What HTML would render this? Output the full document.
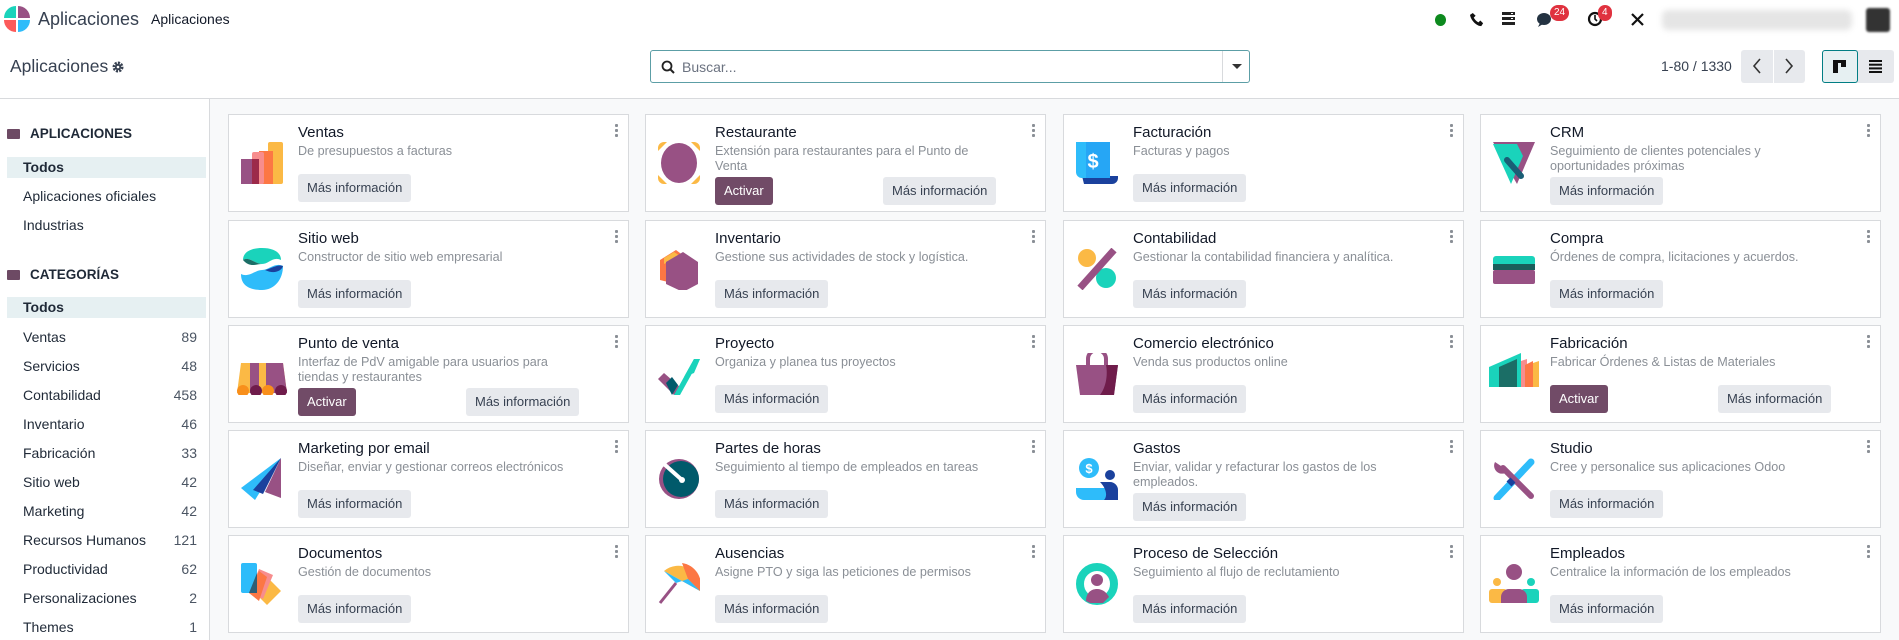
<!DOCTYPE html>
<html><head><meta charset="utf-8"><style>
*{box-sizing:border-box;margin:0;padding:0}
body{width:1899px;height:640px;overflow:hidden;font-family:"Liberation Sans",sans-serif;background:#f8f9fa;position:relative;color:#1f2937}
.abs{position:absolute}
.nav{left:0;top:0;width:1899px;height:40px;background:#fff}
.cp{left:0;top:40px;width:1899px;height:59px;background:#fff;border-bottom:1px solid #d8dadd}
.side{left:0;top:99px;width:210px;height:541px;background:#fff;border-right:1px solid #d8dadd}
.card{position:absolute;width:401px;height:98px;background:#fff;border:1px solid #d8dadd}
.card svg.ic{position:absolute;left:12px;top:27px}
.card .t{position:absolute;left:69px;top:9px;font-size:15px;color:#111827;white-space:nowrap}
.card .d{position:absolute;left:69px;top:29px;font-size:12.6px;line-height:15px;color:#8a8f96;width:272px}
.card .b{position:absolute;top:59px;height:28px;line-height:28px;font-size:13px;color:#374151;background:#e7e9ed;border-radius:3px;padding:0 9px;white-space:nowrap}
.card .b.a{background:#714b67;color:#fff}
.card .dots{position:absolute;right:10px;top:9px;width:3px}
.card .dots i{display:block;width:3px;height:3px;background:#8a8f96;margin-bottom:2px;border-radius:1px}
.si{position:absolute;left:23px;font-size:14px;color:#1f2937}
.sc{position:absolute;right:12px;font-size:14px;color:#4b5563}
.hd{position:absolute;left:7px;font-size:13.5px;font-weight:bold;color:#1f2937}
.hd:before{content:"";display:inline-block;width:13px;height:10px;background:#6d4a64;margin-right:10px;border-radius:1px;vertical-align:-1px}
.sel{position:absolute;left:7px;width:199px;height:21px;background:#e6f0f2}
.badge{position:absolute;background:#e0323f;color:#fff;font-size:10px;border-radius:8px;height:16px;line-height:16px;padding:0 4px}
</style></head><body>
<div class="abs nav">
 <svg class="abs" style="left:4px;top:6px" width="26" height="26" viewBox="0 0 26 26"><path d="M12 0A12 12 0 0 0 0 12h12z" fill="#1ad3bb"/><path d="M14 0a12 12 0 0 1 12 12H14z" fill="#985184"/><path d="M0 14a12 12 0 0 0 12 12V14z" fill="#fc5a5a"/><path d="M14 26a12 12 0 0 0 12-12H14z" fill="#2ebcfa"/></svg>
 <div class="abs" style="left:38px;top:9px;font-size:18px;color:#374151">Aplicaciones</div>
 <div class="abs" style="left:151px;top:11px;font-size:14px;color:#111827">Aplicaciones</div>
 <div class="abs" style="left:1435px;top:14px;width:11px;height:12px;border-radius:50%;background:#0d8a1e"></div>
 <svg class="abs" style="left:1470px;top:12px" width="15" height="15" viewBox="0 0 16 16"><path d="M3 1l3 3-2 2c1 2 3 4 5 5l2-2 3 3-2 3C7 15 1 9 0 3z" fill="#111"/></svg>
 <svg class="abs" style="left:1502px;top:12px" width="13" height="14" viewBox="0 0 13 14"><rect y="0" width="13" height="3" fill="#222"/><rect y="5" width="13" height="3" fill="#222"/><rect y="10" width="13" height="3" fill="#222"/><rect x="9" y="1" width="2" height="1" fill="#fff"/><rect x="9" y="6" width="2" height="1" fill="#fff"/></svg>
 <svg class="abs" style="left:1536px;top:12px" width="18" height="16" viewBox="0 0 18 16"><ellipse cx="8" cy="7" rx="7" ry="6" fill="#243342"/><path d="M4 11l-2 4 5-3z" fill="#243342"/></svg>
 <div class="badge" style="left:1550px;top:5px">24</div>
 <svg class="abs" style="left:1587px;top:11px" width="16" height="16" viewBox="0 0 16 16"><circle cx="8" cy="8" r="6" fill="none" stroke="#111" stroke-width="2.2"/><path d="M8 4v4l2 2" stroke="#111" stroke-width="1.6" fill="none"/></svg>
 <div class="badge" style="left:1598px;top:5px">4</div>
 <svg class="abs" style="left:1630px;top:12px" width="15" height="15" viewBox="0 0 15 15"><path d="M2 2l11 11M13 2L2 13" stroke="#111" stroke-width="2.2"/></svg>
 <div class="abs" style="left:1662px;top:10px;width:190px;height:20px;background:#e5e5e5;border-radius:6px;filter:blur(3px)"></div>
 <div class="abs" style="left:1866px;top:8px;width:24px;height:24px;background:#333;border-radius:3px;filter:blur(1px)"></div>
</div>
<div class="abs cp">
 <div class="abs" style="left:10px;top:16px;font-size:17.5px;color:#374151">Aplicaciones</div>
 <svg class="abs" style="left:112px;top:21px" width="12" height="12" viewBox="0 0 12 12"><circle cx="6" cy="6" r="4" fill="none" stroke="#374151" stroke-width="3" stroke-dasharray="2 1.1"/><circle cx="6" cy="6" r="3.2" fill="#374151"/><circle cx="6" cy="6" r="1.3" fill="#fff"/></svg>
 <div class="abs" style="left:650px;top:10px;width:600px;height:33px;border:1px solid #5c9ea6;border-radius:3px;background:#fff">
  <svg class="abs" style="left:10px;top:9px" width="14" height="14" viewBox="0 0 14 14"><circle cx="6" cy="6" r="4.5" fill="none" stroke="#222" stroke-width="1.8"/><path d="M9.5 9.5l3.5 3.5" stroke="#222" stroke-width="2"/></svg>
  <div class="abs" style="left:31px;top:8px;font-size:14px;color:#6b7280">Buscar...</div>
  <div class="abs" style="left:571px;top:0;width:1px;height:31px;background:#d8dadd"></div>
  <div class="abs" style="left:581px;top:13px;width:0;height:0;border-left:5px solid transparent;border-right:5px solid transparent;border-top:5px solid #333"></div>
 </div>
 <div class="abs" style="left:1661px;top:18px;font-size:14px;color:#374151">1-80 / 1330</div>
 <div class="abs" style="left:1741px;top:10px;width:64px;height:33px;background:#e7e9ed;border-radius:3px"></div>
 <div class="abs" style="left:1773px;top:10px;width:1px;height:33px;background:#fff"></div>
 <svg class="abs" style="left:1751px;top:18px" width="12" height="16" viewBox="0 0 12 16"><path d="M9 1L3 8l6 7" stroke="#333" stroke-width="1.6" fill="none"/></svg>
 <svg class="abs" style="left:1783px;top:18px" width="12" height="16" viewBox="0 0 12 16"><path d="M3 1l6 7-6 7" stroke="#333" stroke-width="1.6" fill="none"/></svg>
 <div class="abs" style="left:1822px;top:10px;width:72px;height:33px;background:#e7e9ed;border-radius:3px"></div>
 <div class="abs" style="left:1822px;top:10px;width:36px;height:33px;background:#e6f0f2;border:1px solid #017e84;border-radius:3px"></div>
 <svg class="abs" style="left:1833px;top:20px" width="13" height="13" viewBox="0 0 13 13"><rect width="13" height="3" fill="#111"/><rect width="5" height="13" fill="#111"/><rect x="8" width="5" height="7" fill="#111"/></svg>
 <svg class="abs" style="left:1869px;top:20px" width="13" height="13" viewBox="0 0 13 13"><rect y="0" width="13" height="2" fill="#111"/><rect y="3.7" width="13" height="2" fill="#111"/><rect y="7.4" width="13" height="2" fill="#111"/><rect y="11" width="13" height="2" fill="#111"/></svg>
</div>
<div class="abs side">
 <div class="hd" style="top:27px">APLICACIONES</div>
 <div class="sel" style="top:58px"></div>
 <div class="si" style="top:60px;font-weight:bold">Todos</div>
 <div class="si" style="top:89px">Aplicaciones oficiales</div>
 <div class="si" style="top:118px">Industrias</div>
 <div class="hd" style="top:168px">CATEGORÍAS</div>
 <div class="sel" style="top:198px"></div>
 <div class="si" style="top:200px;font-weight:bold">Todos</div>
 <div class="si" style="top:230px">Ventas</div><div class="sc" style="top:230px">89</div>
 <div class="si" style="top:259px">Servicios</div><div class="sc" style="top:259px">48</div>
 <div class="si" style="top:288px">Contabilidad</div><div class="sc" style="top:288px">458</div>
 <div class="si" style="top:317px">Inventario</div><div class="sc" style="top:317px">46</div>
 <div class="si" style="top:346px">Fabricación</div><div class="sc" style="top:346px">33</div>
 <div class="si" style="top:375px">Sitio web</div><div class="sc" style="top:375px">42</div>
 <div class="si" style="top:404px">Marketing</div><div class="sc" style="top:404px">42</div>
 <div class="si" style="top:433px">Recursos Humanos</div><div class="sc" style="top:433px">121</div>
 <div class="si" style="top:462px">Productividad</div><div class="sc" style="top:462px">62</div>
 <div class="si" style="top:491px">Personalizaciones</div><div class="sc" style="top:491px">2</div>
 <div class="si" style="top:520px">Themes</div><div class="sc" style="top:520px">1</div>
</div>

<!-- Row 1 -->
<div class="card" style="left:228px;top:114px"><svg class="ic" width="42" height="42" viewBox="0 0 42 42"><rect x="27" y="0" width="15" height="42" rx="2" fill="#fbb945"/><rect x="18" y="9" width="14" height="33" fill="#fc7744"/><rect x="11" y="10" width="12" height="32" rx="2" fill="#f78d8d"/><rect x="0" y="17" width="13" height="25" fill="#985184"/><rect x="11" y="17" width="7" height="25" fill="#9c2a4a"/></svg><div class="t">Ventas</div><div class="d">De presupuestos a facturas</div><div class="b" style="left:69px">Más información</div><div class="dots"><i></i><i></i><i></i></div></div>
<div class="card" style="left:645px;top:114px"><svg class="ic" width="42" height="42" viewBox="0 0 42 42"><path d="M0 6a6 6 0 0 1 6-6h3L0 9zM42 6a6 6 0 0 0-6-6h-3l9 9zM0 36a6 6 0 0 0 6 6h3L0 33zM42 36a6 6 0 0 1-6 6h-3l9-9z" fill="#fbb945"/><ellipse cx="21" cy="21" rx="18" ry="20" fill="#985184"/></svg><div class="t">Restaurante</div><div class="d">Extensión para restaurantes para el Punto de Venta</div><div class="b a" style="left:69px;top:62px">Activar</div><div class="b" style="left:237px;top:62px">Más información</div><div class="dots"><i></i><i></i><i></i></div></div>
<div class="card" style="left:1063px;top:114px"><svg class="ic" width="42" height="42" viewBox="0 0 42 42"><path d="M6 34h36v2a6 6 0 0 1-6 6H8z" fill="#1a419d"/><path d="M0 0h34v36H6a6 6 0 0 1-6-6z" fill="#2ebcfa"/><path d="M10 0h24v36H10z" fill="#1e90f0" opacity=".5"/><text x="17" y="26" font-family="Liberation Sans" font-weight="bold" font-size="20" fill="#fff" text-anchor="middle">$</text></svg><div class="t">Facturación</div><div class="d">Facturas y pagos</div><div class="b" style="left:69px">Más información</div><div class="dots"><i></i><i></i><i></i></div></div>
<div class="card" style="left:1480px;top:114px"><svg class="ic" width="42" height="42" viewBox="0 0 42 42"><path d="M0 0h42l-18 42z" fill="#985184"/><path d="M0 2h24L30 14 18 42z" fill="#1ad3bb"/><path d="M14 18l14 16" stroke="#1a5e75" stroke-width="6" stroke-linecap="round"/></svg><div class="t">CRM</div><div class="d">Seguimiento de clientes potenciales y oportunidades próximas</div><div class="b" style="left:69px;top:62px">Más información</div><div class="dots"><i></i><i></i><i></i></div></div>

<!-- Row 2 -->
<div class="card" style="left:228px;top:220px"><svg class="ic" width="42" height="42" viewBox="0 0 42 42"><path d="M2 12C2 4 10 0 21 0s19 4 19 12c-8-4-12 4-19 4S8 8 2 12z" fill="#1ad3bb"/><path d="M2 12c6-4 12 4 19 4-6 0-12 4-19-4z" fill="#1b6e66"/><path d="M0 26c8 4 14-4 21-4s13-8 21-4c0 14-9 24-21 24S0 38 0 26z" fill="#2ebcfa"/><path d="M24 22c6-1 12-6 18-4-2 6-10 8-18 4z" fill="#1a419d"/></svg><div class="t">Sitio web</div><div class="d">Constructor de sitio web empresarial</div><div class="b" style="left:69px">Más información</div><div class="dots"><i></i><i></i><i></i></div></div>
<div class="card" style="left:645px;top:220px"><svg class="ic" width="42" height="42" viewBox="0 0 42 42"><path d="M2 12L18 2l8 6v30L2 32z" fill="#fc7744"/><path d="M6 10L16 4l6 4L6 16z" fill="#fbb945"/><path d="M8 14l17-10 15 10v22L25 44 8 36z" fill="#985184"/></svg><div class="t">Inventario</div><div class="d">Gestione sus actividades de stock y logística.</div><div class="b" style="left:69px">Más información</div><div class="dots"><i></i><i></i><i></i></div></div>
<div class="card" style="left:1063px;top:220px"><svg class="ic" width="42" height="42" viewBox="0 0 42 42"><circle cx="11" cy="10" r="9" fill="#fbb945"/><circle cx="30" cy="30" r="10" fill="#1ad3bb"/><path d="M4 40L38 2" stroke="#985184" stroke-width="7"/></svg><div class="t">Contabilidad</div><div class="d" style="width:320px">Gestionar la contabilidad financiera y analítica.</div><div class="b" style="left:69px">Más información</div><div class="dots"><i></i><i></i><i></i></div></div>
<div class="card" style="left:1480px;top:220px"><svg class="ic" width="42" height="42" viewBox="0 0 42 42"><rect x="0" y="8" width="42" height="10" rx="3" fill="#1ad3bb"/><rect x="0" y="16" width="42" height="6" fill="#1a5e5b"/><rect x="0" y="22" width="42" height="14" rx="2" fill="#985184"/></svg><div class="t">Compra</div><div class="d" style="width:320px">Órdenes de compra, licitaciones y acuerdos.</div><div class="b" style="left:69px">Más información</div><div class="dots"><i></i><i></i><i></i></div></div>

<!-- Row 3 -->
<div class="card" style="left:228px;top:325px"><svg class="ic" width="50" height="42" viewBox="0 0 50 42" style="left:8px"><path d="M4 10h42l4 30H0z" fill="#fbb945"/><path d="M13 10h9v30h-9zM29 10h9v30h-9z" fill="#985184"/><path d="M38 10h8l4 30h-12z" fill="#985184"/><circle cx="6" cy="38" r="6" fill="#f88f1b"/><circle cx="19" cy="38" r="6" fill="#6f1c4b"/><circle cx="31" cy="38" r="6" fill="#f88f1b"/><circle cx="44" cy="38" r="6" fill="#6f1c4b"/></svg><div class="t">Punto de venta</div><div class="d">Interfaz de PdV amigable para usuarios para tiendas y restaurantes</div><div class="b a" style="left:69px;top:62px">Activar</div><div class="b" style="left:237px;top:62px">Más información</div><div class="dots"><i></i><i></i><i></i></div></div>
<div class="card" style="left:645px;top:325px"><svg class="ic" width="42" height="42" viewBox="0 0 42 42"><path d="M0 26l6-6 16 14-6 8z" fill="#985184"/><path d="M8 30l6-6 6 8-6 10z" fill="#015a6b"/><path d="M16 42L36 6h6L22 42z" fill="#1ad3bb"/><path d="M26 24l10-18 6 0-6 14z" fill="#1ad3bb"/></svg><div class="t">Proyecto</div><div class="d">Organiza y planea tus proyectos</div><div class="b" style="left:69px">Más información</div><div class="dots"><i></i><i></i><i></i></div></div>
<div class="card" style="left:1063px;top:325px"><svg class="ic" width="42" height="42" viewBox="0 0 42 42"><path d="M12 12V6a9 9 0 0 1 18 0v6" stroke="#985184" stroke-width="4" fill="none"/><path d="M0 12h42l-4 30H4z" fill="#985184"/><path d="M30 12h12l-4 30H24c6-8 8-20 6-30z" fill="#6f1c4b"/></svg><div class="t">Comercio electrónico</div><div class="d">Venda sus productos online</div><div class="b" style="left:69px">Más información</div><div class="dots"><i></i><i></i><i></i></div></div>
<div class="card" style="left:1480px;top:325px"><svg class="ic" width="50" height="42" viewBox="0 0 50 42" style="left:8px"><path d="M0 14L32 0v34H0z" fill="#1ad3bb"/><path d="M10 14l18-8v28H10z" fill="#1b6e66"/><path d="M32 8l6-2v28h-6z" fill="#f78d8d"/><path d="M36 12l8-4v26h-8z" fill="#fc7744"/><path d="M44 10l6-2v26h-6z" fill="#fbb945"/></svg><div class="t">Fabricación</div><div class="d" style="width:320px">Fabricar Órdenes &amp; Listas de Materiales</div><div class="b a" style="left:69px">Activar</div><div class="b" style="left:237px">Más información</div><div class="dots"><i></i><i></i><i></i></div></div>

<!-- Row 4 -->
<div class="card" style="left:228px;top:430px"><svg class="ic" width="42" height="42" viewBox="0 0 42 42"><path d="M0 30L40 0 14 42z" fill="#2ebcfa"/><path d="M12 32L40 0 22 36z" fill="#1a419d"/><path d="M40 0v40L24 34z" fill="#985184"/></svg><div class="t">Marketing por email</div><div class="d" style="width:320px">Diseñar, enviar y gestionar correos electrónicos</div><div class="b" style="left:69px">Más información</div><div class="dots"><i></i><i></i><i></i></div></div>
<div class="card" style="left:645px;top:430px"><svg class="ic" width="42" height="42" viewBox="0 0 42 42"><circle cx="21" cy="21" r="20" fill="#985184"/><circle cx="23" cy="21" r="18" fill="#015a6b"/><path d="M6 6l18 16" stroke="#fff" stroke-width="4" stroke-linecap="round"/><circle cx="24" cy="22" r="3" fill="#fff"/></svg><div class="t">Partes de horas</div><div class="d" style="width:320px">Seguimiento al tiempo de empleados en tareas</div><div class="b" style="left:69px">Más información</div><div class="dots"><i></i><i></i><i></i></div></div>
<div class="card" style="left:1063px;top:430px"><svg class="ic" width="42" height="42" viewBox="0 0 42 42"><circle cx="13" cy="10" r="10" fill="#2ebcfa"/><text x="13" y="15" font-family="Liberation Sans" font-weight="bold" font-size="13" fill="#fff" text-anchor="middle">$</text><circle cx="34" cy="17" r="5" fill="#1a419d"/><path d="M0 30h30v12H8a8 8 0 0 1-8-8z" fill="#2ebcfa"/><path d="M24 24h10a8 8 0 0 1 8 8v10H28c4-4 2-12-4-18z" fill="#1a419d"/></svg><div class="t">Gastos</div><div class="d">Enviar, validar y refacturar los gastos de los empleados.</div><div class="b" style="left:69px;top:62px">Más información</div><div class="dots"><i></i><i></i><i></i></div></div>
<div class="card" style="left:1480px;top:430px"><svg class="ic" width="42" height="42" viewBox="0 0 42 42"><path d="M4 40L38 4" stroke="#2ebcfa" stroke-width="7" stroke-linecap="round"/><path d="M10 10l28 28" stroke="#985184" stroke-width="6" stroke-linecap="round"/><path d="M2 4a8 8 0 0 0 12 10L8 8z" fill="#985184"/><path d="M20 22l-4 4" stroke="#1a419d" stroke-width="7"/></svg><div class="t">Studio</div><div class="d" style="width:320px">Cree y personalice sus aplicaciones Odoo</div><div class="b" style="left:69px">Más información</div><div class="dots"><i></i><i></i><i></i></div></div>

<!-- Row 5 -->
<div class="card" style="left:228px;top:535px"><svg class="ic" width="42" height="42" viewBox="0 0 42 42"><path d="M24 12l16 16-14 14-16-16z" fill="#fbb945"/><path d="M18 6l14 6-10 24-14-6z" fill="#f78d8d"/><rect x="0" y="0" width="16" height="30" rx="2" fill="#2ebcfa"/><path d="M8 30L18 8l8 6-8 24z" fill="#fc7744"/><path d="M8 30L16 10v20z" fill="#2d5e75"/></svg><div class="t">Documentos</div><div class="d">Gestión de documentos</div><div class="b" style="left:69px">Más información</div><div class="dots"><i></i><i></i><i></i></div></div>
<div class="card" style="left:645px;top:535px"><svg class="ic" width="42" height="42" viewBox="0 0 42 42"><path d="M6 8a22 22 0 0 1 36 20z" fill="#fbb945"/><path d="M24 0a22 22 0 0 1 18 28L30 16z" fill="#fc7744"/><path d="M6 8l12 12L30 16l12 12" fill="#2ebcfa"/><path d="M18 20L2 40" stroke="#985184" stroke-width="3"/></svg><div class="t">Ausencias</div><div class="d" style="width:320px">Asigne PTO y siga las peticiones de permisos</div><div class="b" style="left:69px">Más información</div><div class="dots"><i></i><i></i><i></i></div></div>
<div class="card" style="left:1063px;top:535px"><svg class="ic" width="42" height="42" viewBox="0 0 42 42"><circle cx="21" cy="21" r="17" fill="none" stroke="#1ad3bb" stroke-width="8"/><circle cx="21" cy="17" r="6" fill="#985184"/><path d="M10 38c0-8 5-12 11-12s10 4 12 8l-6 6H14z" fill="#985184"/></svg><div class="t">Proceso de Selección</div><div class="d" style="width:320px">Seguimiento al flujo de reclutamiento</div><div class="b" style="left:69px">Más información</div><div class="dots"><i></i><i></i><i></i></div></div>
<div class="card" style="left:1480px;top:535px"><svg class="ic" width="50" height="42" viewBox="0 0 50 42" style="left:8px"><circle cx="25" cy="9" r="8" fill="#985184"/><circle cx="8" cy="19" r="4" fill="#fbb945"/><circle cx="42" cy="19" r="4" fill="#1ad3bb"/><rect x="0" y="26" width="18" height="14" rx="3" fill="#fbb945"/><rect x="32" y="26" width="18" height="14" rx="3" fill="#1ad3bb"/><path d="M12 40v-6a8 8 0 0 1 8-8h10a8 8 0 0 1 8 8v6z" fill="#985184"/></svg><div class="t">Empleados</div><div class="d" style="width:320px">Centralice la información de los empleados</div><div class="b" style="left:69px">Más información</div><div class="dots"><i></i><i></i><i></i></div></div>
</body></html>
